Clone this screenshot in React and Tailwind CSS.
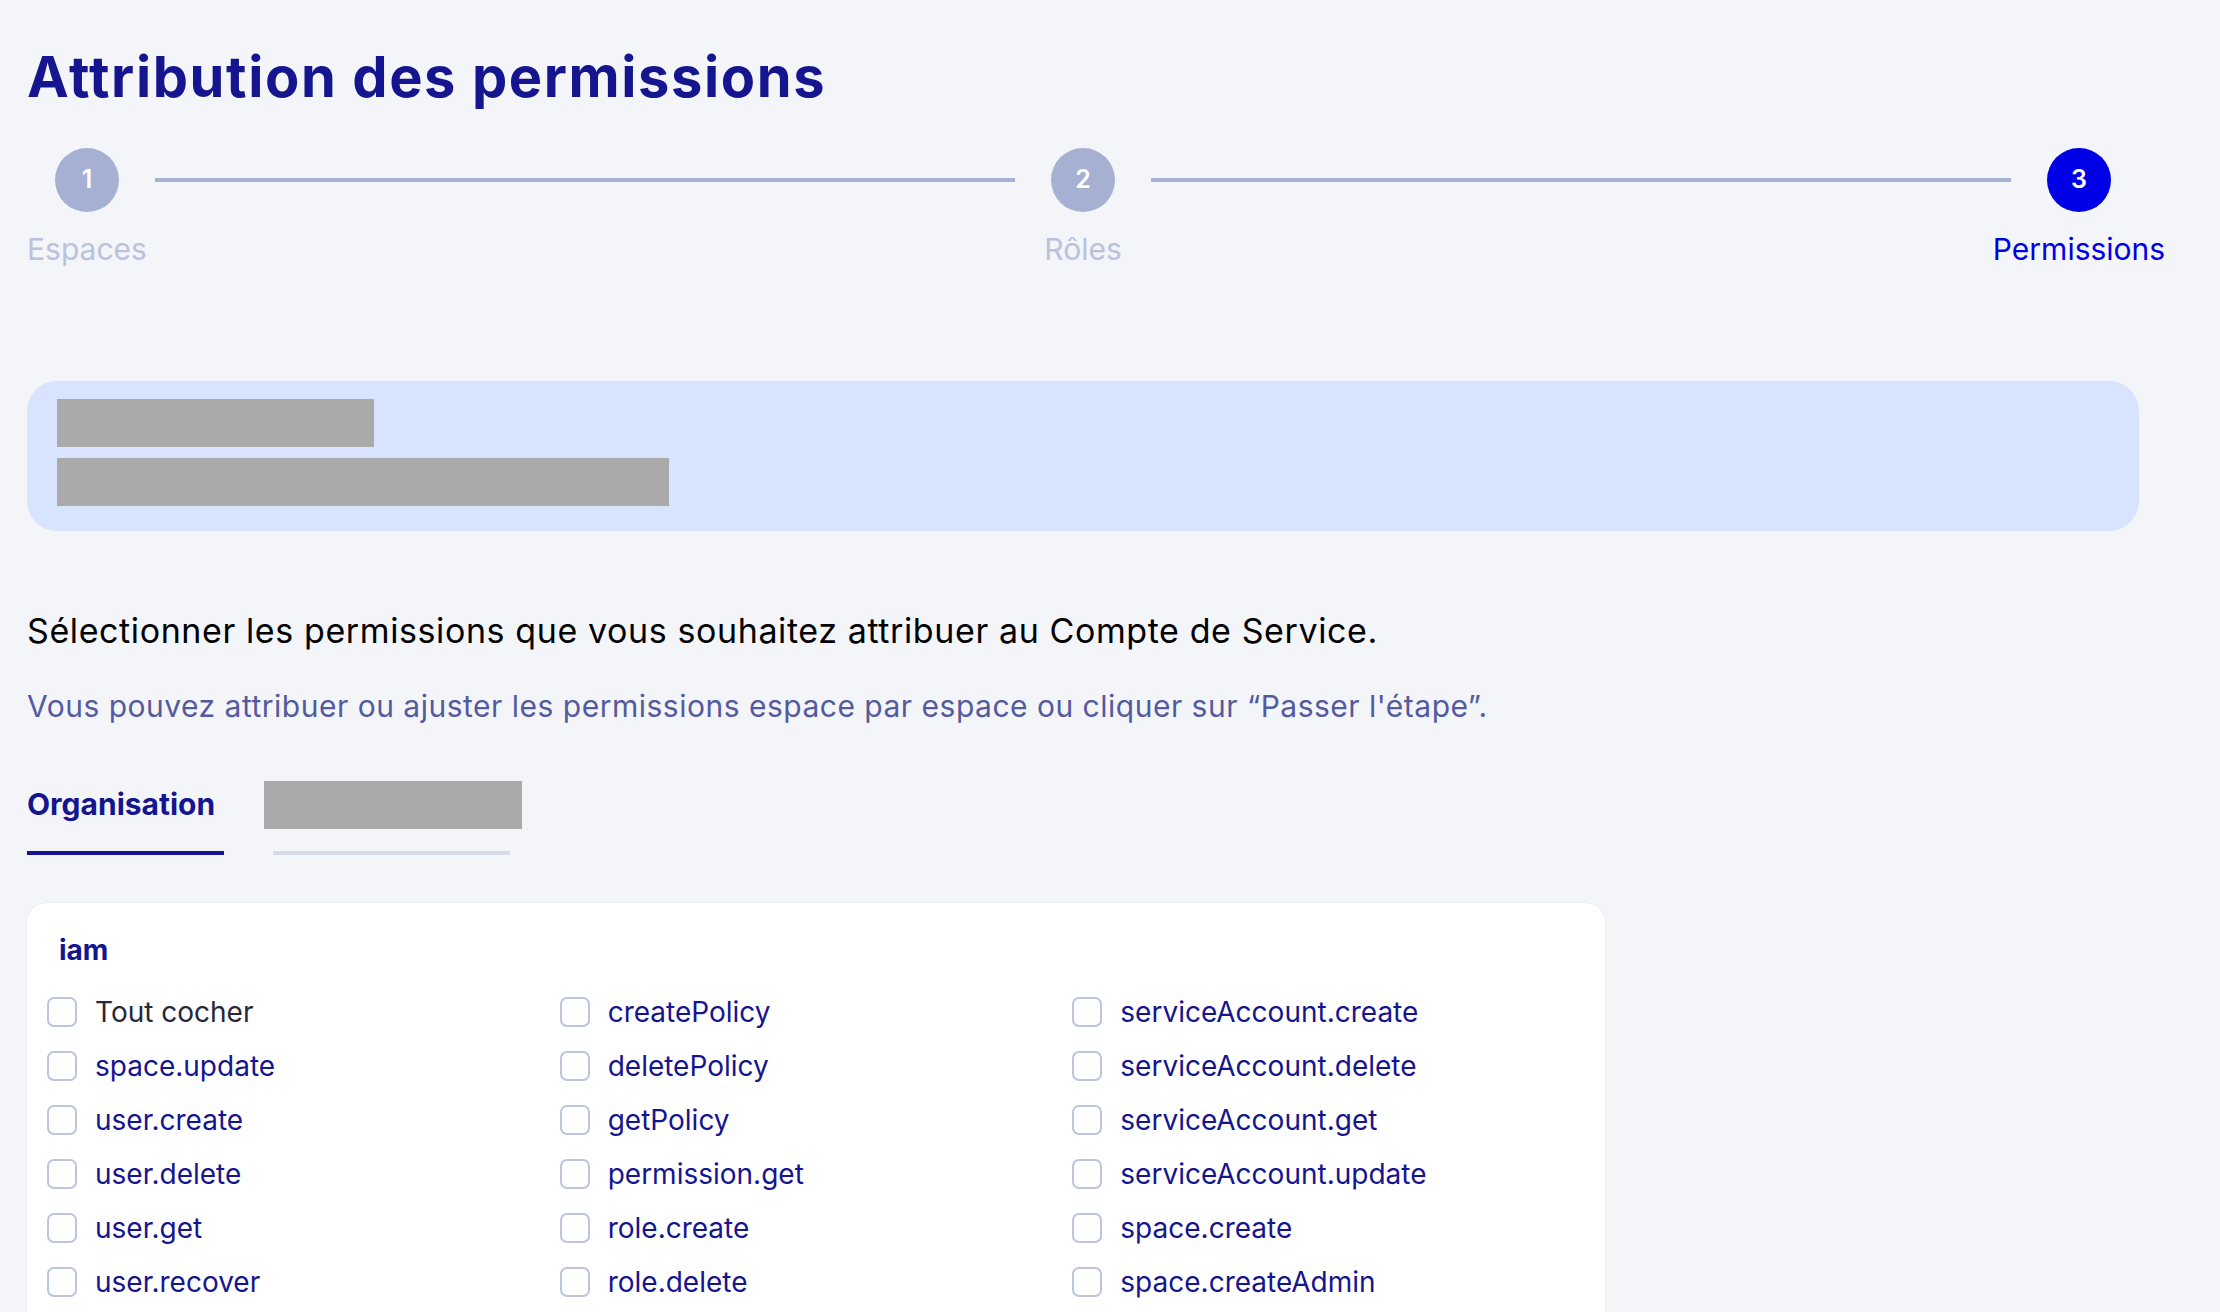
const steps = [
  { n: 1, label: 'Espaces', done: true },
  { n: 2, label: 'Rôles', done: true },
  { n: 3, label: 'Permissions', active: true },
];

const permissions = [
  'Tout cocher', 'createPolicy', 'serviceAccount.create',
  'space.update', 'deletePolicy', 'serviceAccount.delete',
  'user.create', 'getPolicy', 'serviceAccount.get',
  'user.delete', 'permission.get', 'serviceAccount.update',
  'user.get', 'role.create', 'space.create',
  'user.recover', 'role.delete', 'space.createAdmin',
];

const Step = ({ step }) => (
  <div className="flex flex-col items-center w-16 shrink-0">
    <div
      className={`w-16 h-16 rounded-full flex items-center justify-center text-white text-[25px] font-semibold ${
        step.active ? 'bg-[#0000e6]' : 'bg-[#a5b0d3]'
      }`}
    >
      {step.n}
    </div>
    <div
      className={`mt-[22px] text-[30px] leading-none whitespace-nowrap ${
        step.active ? 'text-[#0000e6]' : 'text-[#b9c2dd]'
      }`}
    >
      {step.label}
    </div>
  </div>
);

const App = () => {
  return (
    <div
      className="min-h-screen bg-[#f4f5f9] px-[27px] pt-[49px] pb-10"
      style={{ fontFamily: 'Inter, "Noto Sans", sans-serif' }}
    >
      <div className="w-[2112px]">
        <h1 className="text-[56px] leading-none font-bold tracking-[1.6px] text-[#15158f]">Attribution des permissions</h1>

        {/* stepper */}
        <div className="flex items-start px-7 mt-[43px]">
          {steps.map((step, i) => (
            <div key={step.n} className={`flex items-start ${i < steps.length - 1 ? 'flex-1' : ''}`}>
              <Step step={step} />
              {i < steps.length - 1 && <div className="flex-1 h-1 mx-9 mt-[30px] bg-[#a5b0d3]" />}
            </div>
          ))}
        </div>

        {/* info box */}
        <div className="mt-[117px] bg-[#d8e3fd] rounded-[30px] pl-[30px] pt-[18px] pb-[25px]">
          <div className="w-[317px] h-12 bg-[#aaaaaa]" />
          <div className="w-[612px] h-12 bg-[#aaaaaa] mt-[11px]" />
        </div>

        <p className="mt-[83px] text-[34px] leading-none tracking-[0.6px] text-black">
          Sélectionner les permissions que vous souhaitez attribuer au Compte de Service.
        </p>
        <p className="mt-[43px] text-[30px] leading-none tracking-[0.5px] text-[#535a9f]">
          Vous pouvez attribuer ou ajuster les permissions espace par espace ou cliquer sur “Passer l'étape”.
        </p>

        {/* tabs */}
        <div className="flex items-end gap-[49px] mt-[60px]">
          <div className="w-[197px] pb-8 border-b-4 border-[#15158f] text-[30px] leading-none font-bold whitespace-nowrap text-[#15158f]">
            Organisation
          </div>
          <div className="w-[237px] pb-[22px] border-b-4 border-[#d5dbeb]">
            <div className="-mx-[9px] w-[258px] h-12 bg-[#aaaaaa]" />
          </div>
        </div>

        {/* permissions card */}
        <div className="mt-12 w-[1578px] bg-white rounded-[20px] shadow-[0_0_0_1px_#eceef4] pt-[33px] pb-8">
          <div className="pl-8 text-[28px] leading-none font-bold text-[#15158f]">iam</div>
          <div className="grid grid-cols-3 gap-y-6 px-5 mt-[33px]">
            {permissions.map((p, i) => (
              <label key={p} className="flex items-center gap-[18px] h-[30px]">
                <span className="w-[30px] h-[30px] rounded-[7px] border-2 border-[#bcc5df] bg-white shrink-0" />
                <span className={`text-[28px] leading-none ${i === 0 ? 'text-[#27283a]' : 'text-[#15158f]'}`}>{p}</span>
              </label>
            ))}
          </div>
        </div>
      </div>
    </div>
  );
};

export default App;
